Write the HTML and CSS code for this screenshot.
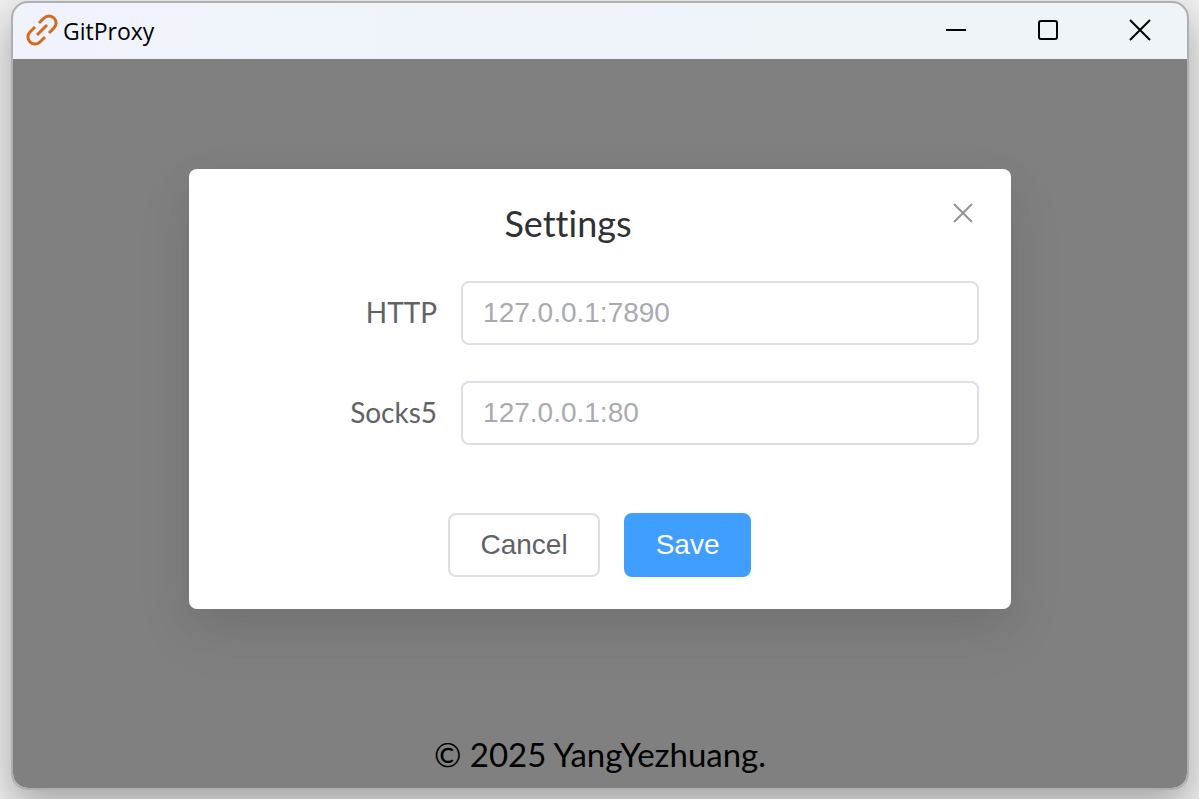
FILE: index.html
```html
<!DOCTYPE html>
<html lang="en">
<head>
<meta charset="utf-8">
<title>GitProxy</title>
<link rel="stylesheet" href="styles.css">
</head>
<body>
<div class="window">
  <header class="titlebar">
    <svg class="logo" viewBox="0 0 32 32" aria-hidden="true"><path d="M13 9 18 4A7.07 7.07 0 0 1 28 14L23 19M19 23 14 28A7.07 7.07 0 0 1 4 18L9 13M11 21 21 11"/></svg>
    <span class="app-name">GitProxy</span>
    <div class="controls">
      <button class="control" aria-label="Minimize"><svg viewBox="0 0 22 22"><path d="M1 11H21"/></svg></button>
      <button class="control" aria-label="Maximize"><svg viewBox="0 0 22 22"><rect x="2" y="2" width="18" height="18" rx="2"/></svg></button>
      <button class="control" aria-label="Close"><svg viewBox="0 0 22 22"><path d="M1 1 21 21M21 1 1 21"/></svg></button>
    </div>
  </header>
  <main class="content">
    <form class="dialog" role="dialog" aria-labelledby="dialog-title">
      <button class="dismiss" type="button" aria-label="Close settings"><svg viewBox="0 0 22 22"><path d="M2 2 20 20M20 2 2 20"/></svg></button>
      <h1 class="title" id="dialog-title">Settings</h1>
      <div class="field">
        <label class="label" for="http">HTTP</label>
        <input class="input" id="http" type="text" placeholder="127.0.0.1:7890">
      </div>
      <div class="field">
        <label class="label" for="socks">Socks5</label>
        <input class="input" id="socks" type="text" placeholder="127.0.0.1:80">
      </div>
      <div class="actions">
        <button class="button" type="button">Cancel</button>
        <button class="button primary" type="button">Save</button>
      </div>
    </form>
    <footer class="footer">© 2025 YangYezhuang.</footer>
  </main>
</div>
</body>
</html>
```
FILE: styles.css
```css
* {
  box-sizing: border-box;
}

body {
  display: flex;
  min-height: 100vh;
  margin: 0;
  padding: 1px 10px 9px 11px;
  overflow: hidden;
  background: #f0f0f0;
  font-family: "Lato", sans-serif;
  font-variant-ligatures: none;
}

button {
  padding: 0;
  border: 0;
  background: none;
}

.window {
  display: flex;
  flex: 1;
  flex-direction: column;
  overflow: hidden;
  border: 2px solid #adafb0;
  border-radius: 17px;
  background: #808080;
  background-clip: padding-box;
  box-shadow: 0 16px 40px rgba(0, 0, 0, 0.32);
}

.titlebar {
  display: flex;
  align-items: center;
  height: 56px;
  padding: 0 1px 2px 13px;
  background: linear-gradient(90deg, #f0f3fb, #eef4f8);
}

.logo {
  width: 32px;
  height: 32px;
  fill: none;
  stroke: #d5691f;
  stroke-width: 3;
}

.app-name {
  flex: 1;
  padding: 2px 0 0 5px;
  font: 23px/32px "Open Sans", sans-serif;
  color: #000;
}

.controls {
  display: flex;
  align-self: stretch;
}

.control {
  display: grid;
  place-items: center;
  width: 92px;
}

.control svg,
.dismiss svg {
  width: 22px;
  height: 22px;
  fill: none;
  stroke: #000;
  stroke-width: 2;
}

.content {
  display: flex;
  flex: 1;
  flex-direction: column;
  align-items: center;
  padding: 110px 0 12px;
}

.dialog {
  position: relative;
  width: 70%;
  padding: 32px;
  border-radius: 8px;
  background: #fff;
  box-shadow: 0 24px 64px 8px rgba(0, 0, 0, 0.04), 0 16px 40px rgba(0, 0, 0, 0.08);
}

.dismiss {
  position: absolute;
  top: 28px;
  right: 32px;
  display: grid;
  place-items: center;
  width: 32px;
  height: 32px;
}

.dismiss svg {
  stroke: #909399;
}

.title {
  margin: 0 0 36px;
  padding-right: 64px;
  font-size: 36px;
  font-weight: 400;
  line-height: 44px;
  color: #303133;
  text-align: center;
}

.field {
  display: flex;
  align-items: flex-start;
  margin-bottom: 36px;
}

.label {
  width: 240px;
  padding-right: 24px;
  font-size: 28px;
  line-height: 62px;
  color: #606266;
  text-align: right;
}

.input {
  flex: 1;
  min-width: 0;
  height: 64px;
  padding: 0 20px;
  border: 2px solid #dcdfe6;
  border-radius: 8px;
  font: 28px "Liberation Sans", sans-serif;
  color: #606266;
}

.input::placeholder {
  color: #a8abb2;
}

.actions {
  display: flex;
  justify-content: center;
  gap: 24px;
  padding-top: 32px;
}

.button {
  height: 64px;
  padding: 0 30px;
  border: 2px solid #dcdfe6;
  border-radius: 8px;
  font: 28px "Liberation Sans", sans-serif;
  color: #606266;
}

.primary {
  border-color: #409eff;
  background: #409eff;
  color: #fff;
}

.footer {
  margin-top: auto;
  font-size: 33px;
  line-height: 44px;
  color: #000;
}
```
